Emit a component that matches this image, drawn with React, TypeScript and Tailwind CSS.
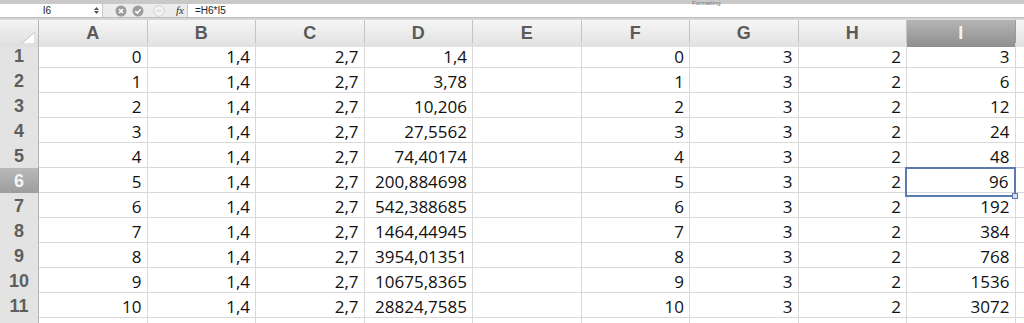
import React from "react";

const cols = ["A", "B", "C", "D", "E", "F", "G", "H", "I"];
const Dvals = ["1,4", "3,78", "10,206", "27,5562", "74,40174", "200,884698", "542,388685", "1464,44945", "3954,01351", "10675,8365", "28824,7585"];
const Ivals = ["3", "6", "12", "24", "48", "96", "192", "384", "768", "1536", "3072"];

const rows = Array.from({ length: 11 }, (_, i) => [
  String(i),
  "1,4",
  "2,7",
  Dvals[i],
  "",
  String(i),
  "3",
  "2",
  Ivals[i],
]);

const grid = "grid grid-cols-[39px_repeat(9,108.5px)_1fr]";
const cellFont = { fontFamily: "'Open Sans', 'Noto Sans', sans-serif" };

export default function App() {
  return (
    <div className="w-[1024px] h-[323px] overflow-hidden bg-white relative select-none">
      {/* top strip */}
      <div className="h-[4px] bg-[#c9c9c9] relative overflow-visible">
        <span className="absolute left-[692px] top-0 text-[6px] leading-[6px] text-[#777]" style={{ fontFamily: "'Liberation Sans', sans-serif" }}>Formatting</span>
      </div>
      {/* formula bar */}
      <div className="h-[14px] flex items-stretch bg-white border-b border-[#bdbdbd] text-[10px] text-[#222]" style={{ fontFamily: "'Liberation Sans', sans-serif" }}>
        <div className="w-[91px] flex items-center justify-center pl-[3px]">I6</div>
        <div className="w-[12px] flex flex-col items-center justify-center gap-[1px] border-r border-[#c8c8c8]">
          <svg width="5" height="3" viewBox="0 0 5 3"><path d="M0 3 L2.5 0 L5 3Z" fill="#555" /></svg>
          <svg width="5" height="3" viewBox="0 0 5 3"><path d="M0 0 L2.5 3 L5 0Z" fill="#555" /></svg>
        </div>
        <div className="w-[85px] flex items-center bg-[#ececec] border-r border-[#c8c8c8] pl-[12px] gap-[5px]">
          <svg width="12" height="12" viewBox="0 0 12 12">
            <circle cx="6" cy="6" r="5.5" fill="#9c9c9c" />
            <path d="M4 4 L8 8 M8 4 L4 8" stroke="#fff" strokeWidth="1.6" />
          </svg>
          <svg width="12" height="12" viewBox="0 0 12 12">
            <circle cx="6" cy="6" r="5.5" fill="#9c9c9c" />
            <path d="M3.3 6.2 L5.3 8 L8.7 4.2" stroke="#fff" strokeWidth="1.6" fill="none" />
          </svg>
          <svg width="12" height="12" viewBox="0 0 12 12" className="ml-[4px]">
            <circle cx="6" cy="6" r="5.3" fill="#f3f3f3" stroke="#d0d0d0" />
            <path d="M3.5 6 L8.5 6" stroke="#d0d0d0" strokeWidth="1.2" />
          </svg>
          <span className="italic text-[11px] text-[#333] ml-[6px]" style={{ fontFamily: "'Liberation Serif', serif" }}>fx</span>
        </div>
        <div className="flex items-center pl-[7px]">=H6*I5</div>
      </div>
      <div className="h-[2px] bg-[#d6d6d6]" />
      {/* column header */}
      <div className={`${grid} h-[23px] border-b border-[#a9a9a9]`}>
        <div className="bg-gradient-to-b from-[#f4f4f4] to-[#dedede] border-r border-[#b5b5b5] relative">
          <svg className="absolute right-[3px] bottom-[3px]" width="14" height="12" viewBox="0 0 14 12">
            <path d="M14 0 L14 12 L0 12 Z" fill="#fff" stroke="#c2c2c2" />
          </svg>
        </div>
        {cols.map((c) => (
          <div
            key={c}
            className={
              c === "I"
                ? "bg-gradient-to-b from-[#b5b5b5] to-[#8f8f8f] border-r border-[#9a9a9a] flex items-center justify-center text-[18px] font-bold text-[#f4f4f4]"
                : "bg-gradient-to-b from-[#f6f6f6] to-[#e1e1e1] border-r border-[#c4c4c4] flex items-center justify-center text-[18px] font-bold text-[#5a5a5a]"
            }
            style={{ fontFamily: "'Liberation Sans', sans-serif" }}
          >
            {c}
          </div>
        ))}
        <div className="bg-gradient-to-b from-[#f6f6f6] to-[#e1e1e1]" />
      </div>
      {/* rows */}
      {rows.map((r, ri) => (
        <div key={ri} className={`${grid} h-[25px] border-b border-[#d9d9d9]`}>
          <div
            className={
              ri === 5
                ? "bg-gradient-to-b from-[#b9b9b9] to-[#9a9a9a] border-r border-[#9a9a9a] flex items-center justify-center text-[18px] font-bold text-[#f4f4f4]"
                : "bg-[#e3e3e3] border-r border-[#b5b5b5] flex items-center justify-center text-[18px] font-bold text-[#5e5e5e]"
            }
            style={{ fontFamily: "'Liberation Sans', sans-serif" }}
          >
            {ri + 1}
          </div>
          {r.map((v, ci) => (
            <div
              key={ci}
              className={
                ri === 5 && ci === 8
                  ? "relative border-[2px] border-[#5b7bb0] -mt-[1px] -ml-[2px] -mb-[1px] flex items-center justify-end pr-[5px] text-[17px] text-[#111]"
                  : "border-r border-[#d9d9d9] flex items-center justify-end pr-[5px] text-[17px] text-[#111]"
              }
              style={cellFont}
            >
              {v}
              {ri === 5 && ci === 8 && (
                <span className="absolute right-[-4px] bottom-[-4px] w-[6px] h-[6px] bg-[#d4deee] border border-[#5b7bb0]" />
              )}
            </div>
          ))}
          <div />
        </div>
      ))}
      <div className={`${grid} h-[10px]`}>
        <div className="bg-[#e3e3e3] border-r border-[#b5b5b5]" />
        {cols.map((c) => (
          <div key={c} className="border-r border-[#d9d9d9]" />
        ))}
      </div>
    </div>
  );
}
